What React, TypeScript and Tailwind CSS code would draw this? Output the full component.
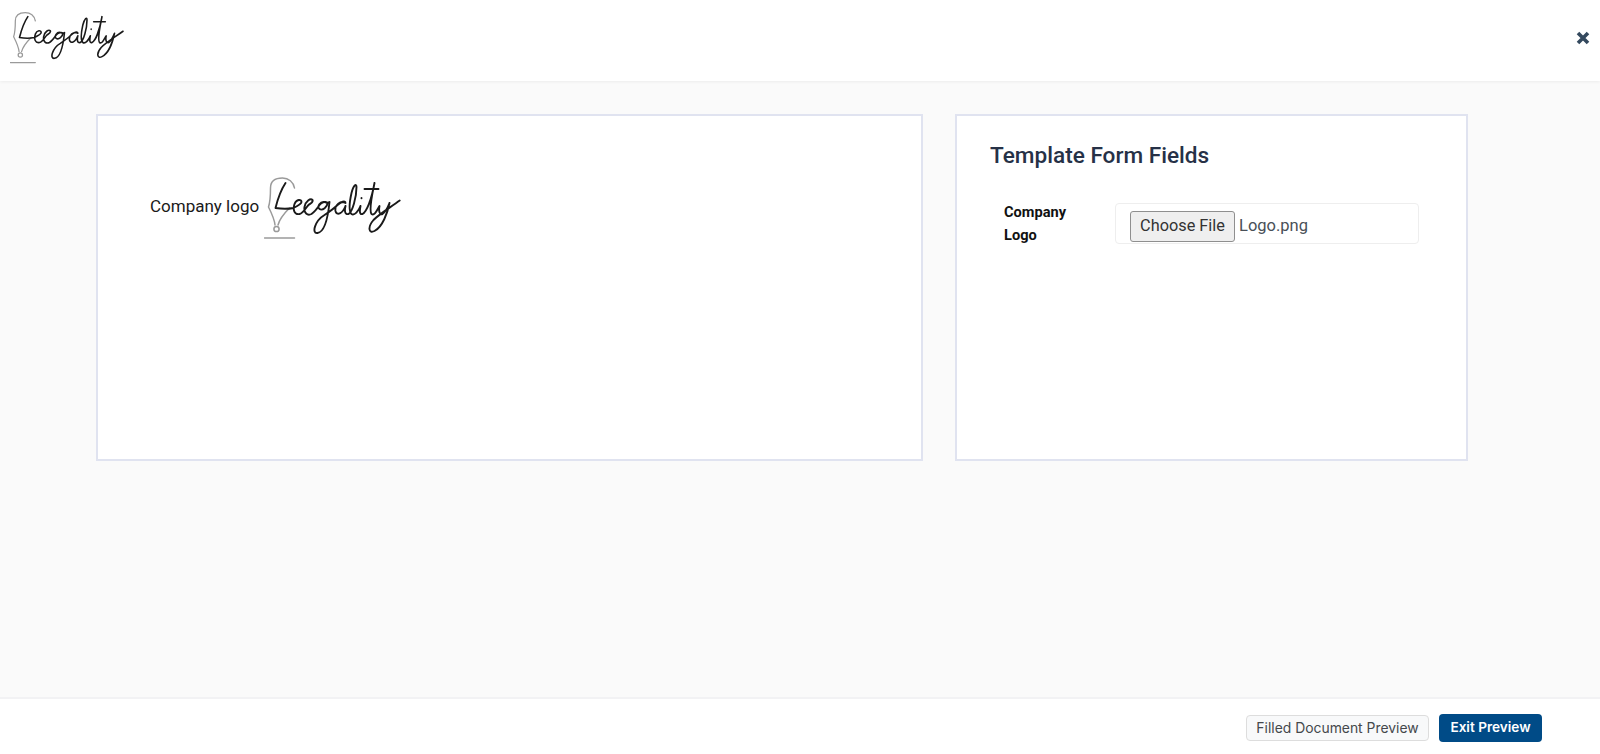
const Logo = ({ className }: { className: string }) => (
  <svg viewBox="0 0 136 66" fill="none" className={className}>
    <g stroke="#9a9a9a" strokeWidth="1.5" strokeLinecap="round">
      <path d="M30 13C29 7 24 3 18 3C11 3 6 6 6 13C6 19 6 26 4 32C7 38 10 44 10.5 50" />
      <path d="M25 33C20 38 15 44 13.5 50" />
      <circle cx="12" cy="54" r="2.6" />
      <path d="M0 63H30" />
    </g>
    <path
      stroke="#1a1a1a"
      strokeWidth="1.9"
      strokeLinecap="round"
      strokeLinejoin="round"
      d="M21 8C17 14 13 25 11 33C17 34 24 34 29 33C33 31 37 29 37 27C37 24 32 24 30 29C28 35 30 40 35 39C39 38 41 33 44 30C47 28 49 27 48 25C46 23 41 26 40 32C39 38 43 41 47 39C50 37 53 33 55 30C57 27 62 26 63 28C63 32 58 36 55 34C52 32 56 26 60 27C63 28 64 28 65 27C64 37 61 57 53 58C47 59 50 46 60 40C66 36 70 33 73 30C76 27 81 25 81 28C76 25 70 30 71 36C72 41 78 39 81 31C80 35 80 40 84 39C88 37 92 22 92 12C92 8 89 10 87 18C85 27 84 36 87 39C90 41 94 36 96 31C95 36 95 40 98 39C102 37 107 25 110 8C108 18 104 35 107 39C110 41 112 36 115 31C114 36 115 40 118 39C121 37 123 33 125 28C123 38 118 52 110 56C104 59 103 52 109 45C116 38 125 33 135.2 25.5"
    />
    <path stroke="#1a1a1a" strokeWidth="1.9" strokeLinecap="round" d="M100 14H114M97 23V23.2" />
  </svg>
);

export default function App() {
  return (
    <div className="flex h-[754px] flex-col overflow-hidden bg-[#fafafa] font-['Roboto',sans-serif]">
      <header className="flex h-[81px] shrink-0 items-center justify-between bg-white pl-[10px] pr-[10px] shadow-[0_1px_3px_rgba(0,0,0,0.06)]">
        <Logo className="mt-[-6px] h-[55px] w-[114px]" />
        <svg viewBox="0 0 14 14" className="mt-[-5px] h-[14px] w-[14px] text-[#34495e]" fill="none" stroke="currentColor" strokeWidth="3.6">
          <path d="M2 2L12 12M12 2L2 12" />
        </svg>
      </header>
      <main className="flex flex-1 items-start gap-[32px] pl-[96px] pt-[33px]">
        <section className="flex h-[347px] w-[827px] items-start border-2 border-[#e0e3f0] bg-white pl-[52px] pt-[59px]">
          <span className="mt-[19px] text-[17px] leading-[24px] text-[#1a1a1a]">Company logo</span>
          <Logo className="ml-[5px] h-[66px] w-[137px]" />
        </section>
        <section className="h-[347px] w-[513px] border-2 border-[#e0e3f0] bg-white pl-[33px] pt-[25px]">
          <h2 className="text-[22.6px] leading-[30px] font-medium text-[#263147]">Template Form Fields</h2>
          <div className="mt-[30px] flex items-start pl-[14px]">
            <div className="w-[111px] text-[14.6px] leading-[23px] font-bold text-[#111]">
              Company
              <br />
              Logo
            </div>
            <div className="mt-[2px] flex h-[41px] w-[304px] items-center gap-[4px] rounded-[4px] border border-[#eeeeee] pl-[14px] pt-[6px]">
              <button className="h-[31px] w-[105px] rounded-[3px] border border-[#8f8f8f] bg-[#efefef] text-[16.3px] text-[#333]">Choose File</button>
              <span className="text-[16.5px] text-[#495057]">Logo.png</span>
            </div>
          </div>
        </section>
      </main>
      <footer className="flex h-[57px] shrink-0 items-center justify-end gap-[10px] border-t-2 border-[#f2f2f4] bg-white pr-[58px] pt-[2px] font-['Inter',sans-serif]">
        <button className="h-[26px] w-[183px] rounded-[4px] border border-[#dddddd] bg-[#f8f9fa] pt-[1px] text-[13.9px] text-[#44484c]">Filled Document Preview</button>
        <button className="h-[28px] w-[103px] rounded-[4px] bg-[#004b87] text-[13.6px] font-semibold text-white">Exit Preview</button>
      </footer>
    </div>
  );
}
